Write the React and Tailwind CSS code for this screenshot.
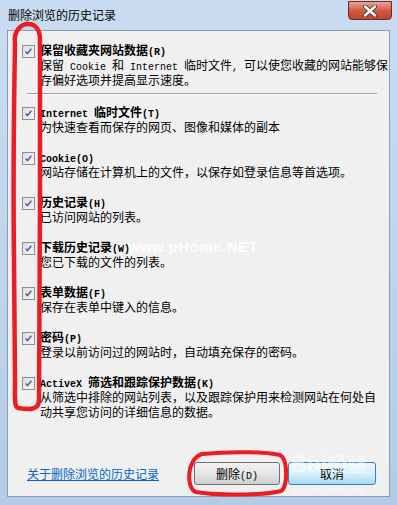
import React from 'react';

const items = [
  { title: '保留收藏夹网站数据(R)', desc: ['保留 Cookie 和 Internet 临时文件, 可以使您收藏的网站能够保', '存偏好选项并提高显示速度。'] },
  { title: 'Internet 临时文件(T)', desc: ['为快速查看而保存的网页、图像和媒体的副本'] },
  { title: 'Cookie(O)', desc: ['网站存储在计算机上的文件，以保存如登录信息等首选项。'] },
  { title: '历史记录(H)', desc: ['已访问网站的列表。'] },
  { title: '下载历史记录(W)', desc: ['您已下载的文件的列表。'] },
  { title: '表单数据(F)', desc: ['保存在表单中键入的信息。'] },
  { title: '密码(P)', desc: ['登录以前访问过的网站时，自动填充保存的密码。'] },
  { title: 'ActiveX 筛选和跟踪保护数据(K)', desc: ['从筛选中排除的网站列表，以及跟踪保护用来检测网站在何处自', '动共享您访问的详细信息的数据。'] },
];

// latin runs get a 6px-wide mono so they sit like the half-width glyphs in the shot
const mixed = (s) =>
  s.split(/([\x20-\x7e]+)/).map((p, i) =>
    /^[\x20-\x7e]+$/.test(p) ? (
      <span key={i} className="font-['Liberation_Mono',monospace] text-[10px] leading-none">{p}</span>
    ) : (
      p
    )
  );

const CheckBox = () => (
  <div className="mt-[2px] w-[13px] h-[13px] shrink-0 border border-[#8e8f8f] bg-gradient-to-br from-[#dcdcdc] to-[#f8f8f8] p-[1px]">
    <svg viewBox="0 0 11 11" className="w-full h-full">
      <path d="M2 5.5 L4.3 8 L9 2.2" fill="none" stroke="#4c61a3" strokeWidth="1.8" />
    </svg>
  </div>
);

const Item = ({ item, first }) => (
  <div className={first ? 'flex gap-[5px] pl-[14px]' : 'flex gap-[5px] pl-[14px] mb-[16px]'}>
    <CheckBox />
    <div className="text-[12px] text-black">
      <div className="font-bold h-[14px] leading-[14px] whitespace-nowrap">{mixed(item.title)}</div>
      {item.desc.map((d, i) => (
        <div key={i} className="h-[15px] leading-[15px] whitespace-nowrap">{mixed(d)}</div>
      ))}
    </div>
  </div>
);

export default function App() {
  return (
    <div className="relative w-[397px] h-[505px] overflow-hidden bg-gradient-to-b from-[#c9dcf1] via-[#bfd5ec] to-[#b3cbe6] font-['Noto_Sans_CJK_SC',sans-serif]">
      {/* title bar */}
      <div className="h-[30px] flex items-center pl-[8px] text-[12px] text-black">
        删除浏览的历史记录
      </div>
      <div className="absolute top-[1px] right-[5px] w-[44px] h-[19px] rounded-b-[4px] border border-[#6e2a20] bg-gradient-to-b from-[#e8a594] via-[#d35a42] to-[#c1432c] flex items-center justify-center">
        <svg width="16" height="12" viewBox="0 0 16 12">
          <path d="M3 1.5 L13 10.5 M13 1.5 L3 10.5" stroke="#3b3b3b" strokeWidth="4.2" strokeLinecap="round" />
          <path d="M3 1.5 L13 10.5 M13 1.5 L3 10.5" stroke="#ffffff" strokeWidth="2.4" strokeLinecap="round" />
        </svg>
      </div>

      {/* client area */}
      <div className="mx-[7px] h-[467px] border border-[#8c9cb0] bg-[#f0f0f0] pt-[12px] flex flex-col">
        <Item item={items[0]} first />
        <div className="ml-[19px] mt-[6px] w-[350px] h-[2px] border-t border-[#a0a0a0] border-b border-b-white" />
        <div className="mt-[10px]">
          {items.slice(1).map((it, i) => (
            <Item key={i} item={it} />
          ))}
        </div>

        <div className="mt-[27px] flex items-center pl-[19px] pr-[13px]">
          <span className="text-[12px] leading-[15px] text-[#0066cc] underline">关于删除浏览的历史记录</span>
          <div className="ml-auto flex gap-[8px]">
            <button className="w-[86px] h-[23px] rounded-[3px] border border-[#707070] bg-gradient-to-b from-[#f2f2f2] via-[#e6e6e6] to-[#cfcfcf] text-[12px] leading-[15px] text-black">
              删除{mixed('(D)')}
            </button>
            <button className="w-[88px] h-[23px] rounded-[3px] border border-[#3c7fb1] bg-gradient-to-b from-[#eaf6fd] via-[#d9f0fc] to-[#a7d9f5] text-[12px] leading-[15px] text-black">
              取消
            </button>
          </div>
        </div>
      </div>

      {/* watermarks */}
      <div className="absolute left-[128px] top-[236px] text-[15px] font-bold text-white/80 tracking-[0.5px] font-['Liberation_Sans',sans-serif]">
        www.pHome.NET
      </div>
      <div className="absolute left-[290px] top-[452px] text-[24px] font-bold text-white/50 leading-none font-['Liberation_Sans','Noto_Sans_CJK_SC',sans-serif]">
        Bai<span className="text-[20px]">经验</span>
      </div>
      <div className="absolute left-[292px] top-[486px] text-[9px] leading-none text-white/50 font-['Liberation_Sans',sans-serif]">
        jingyan.baidu.com
      </div>

      {/* red annotations */}
      <svg className="absolute inset-0 pointer-events-none" width="397" height="505" viewBox="0 0 397 505">
        <path
          d="M15 44 C13 30, 22 24, 28 24 C36 24, 40 30, 40 40 L40 200 C40 280, 39 350, 39 400 C39 410, 30 410, 18 408 C14 407, 15 395, 15 380 L14 260 C13 180, 14 100, 15 44 Z"
          fill="none"
          stroke="#ea1c24"
          strokeWidth="4.5"
          strokeLinejoin="round"
        />
        <path
          d="M202 454 C232 451, 268 452, 280 455 C288 459, 288 487, 281 491 C262 496, 212 495, 196 492 C186 489, 186 459, 202 454 Z"
          fill="none"
          stroke="#ea1c24"
          strokeWidth="4"
        />
      </svg>
    </div>
  );
}
